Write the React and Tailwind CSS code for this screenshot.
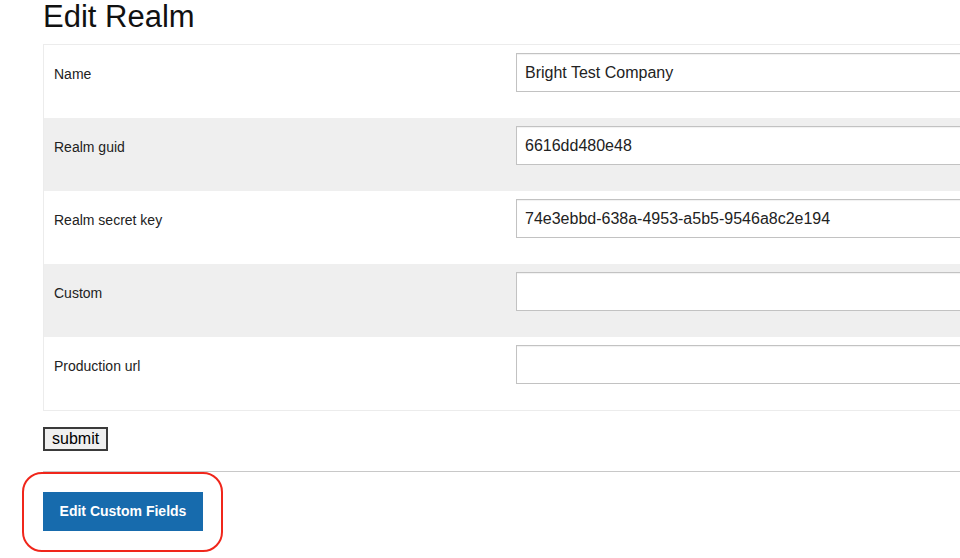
import React from "react";

const fields = [
  { label: "Name", value: "Bright Test Company" },
  { label: "Realm guid", value: "6616dd480e48" },
  { label: "Realm secret key", value: "74e3ebbd-638a-4953-a5b5-9546a8c2e194" },
  { label: "Custom", value: "" },
  { label: "Production url", value: "" },
];

const App = () => {
  return (
    <div
      className="relative w-[960px] h-[558px] overflow-hidden bg-white text-black"
      style={{ fontFamily: '"Liberation Sans", Arial, sans-serif' }}
    >
      <div className="pl-[43px] w-[1100px]">
        {/* Header */}
        <h1 className="text-[31px] leading-[30px] pt-[2px] h-[44px] font-normal text-[#111]">Edit Realm</h1>

        {/* Form table */}
        <div className="border border-[#ececec]">
          {fields.map((f, i) => (
            <div key={f.label} className={`flex h-[73px] ${i % 2 === 1 ? "bg-[#efefef]" : "bg-white"}`}>
              <div className="w-[472px] pl-[10px] pt-[21px] text-[14px] leading-[16px] text-[#222]">{f.label}</div>
              <div className="flex-1 pt-[8px]">
                <input
                  type="text"
                  defaultValue={f.value}
                  className="w-full h-[39px] border border-[#c2c2c2] bg-white px-[8px] text-[16px] text-[#222] outline-none shadow-[inset_0_1px_1px_rgba(0,0,0,0.06)]"
                />
              </div>
            </div>
          ))}
        </div>

        <div className="pt-[16px] pb-[20px]">
          <button className="h-[24px] px-[7px] border-2 border-[#3a3a3a] bg-[#efefef] text-[16px] leading-[18px] text-black">
            submit
          </button>
        </div>

        <hr className="border-0 border-t border-[#c8c8c8]" />

        <div className="pt-[20px]">
          <button className="w-[160px] h-[39px] bg-[#176bad] text-white text-[14px] font-bold">Edit Custom Fields</button>
        </div>
      </div>

      {/* annotation highlight */}
      <div className="absolute left-[22px] top-[472px] w-[201px] h-[80px] border-2 border-[#f0261b] rounded-[20px] pointer-events-none" />
    </div>
  );
};

export default App;
